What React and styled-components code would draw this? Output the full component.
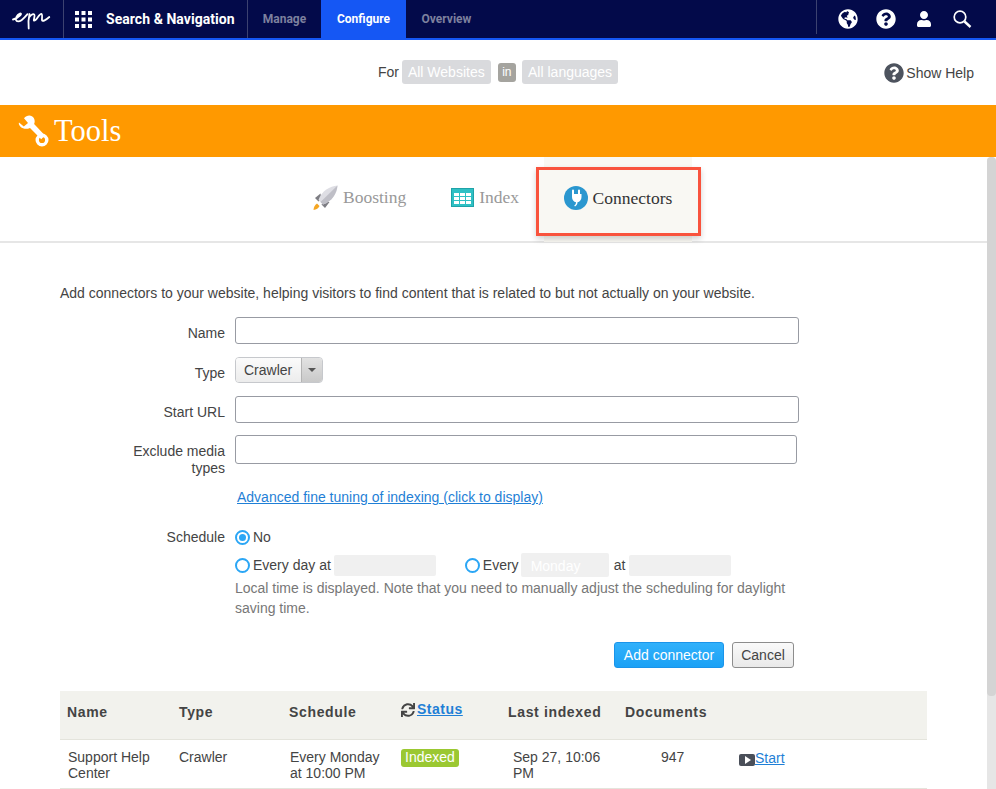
import React from 'react';
import styled, { createGlobalStyle } from 'styled-components';
import { FaGlobeAmericas, FaQuestionCircle, FaUser, FaSync } from 'react-icons/fa';

const Global = createGlobalStyle`
  html, body { margin: 0; padding: 0; height: 789px; overflow: hidden; background: #fff; }
  body { font-family: "Liberation Sans", Arial, sans-serif; font-size: 14px; color: #444; }
  * { box-sizing: border-box; }
`;

const Page = styled.div`
  width: 996px; height: 789px; overflow: hidden; display: flex; flex-direction: column;
`;

const TopBar = styled.header`
  height: 40px; flex: none; display: flex; background: #030a4a; border-bottom: 2px solid #1557f4;
  font-family: "Roboto", sans-serif;
`;
const NavCell = styled.div`
  display: flex; align-items: center; height: 38px; padding: ${p => p.$pad || '0'};
  border-right: ${p => p.$line ? '1px solid #3c4270' : 'none'};
  width: ${p => p.$w || 'auto'};
`;
const Product = styled.span`
  color: #fff; font-weight: 700; font-size: 14px; margin-left: 14px; letter-spacing: 0.05px; white-space: nowrap;
`;
const NavTab = styled.div`
  height: 38px; display: flex; align-items: center; justify-content: center; width: ${p => p.$w};
  font-size: 12px; font-weight: 700; color: ${p => p.$active ? '#fff' : '#7d809e'};
  background: ${p => p.$active ? '#1557f4' : 'transparent'};
`;
const NavRight = styled.div`
  margin-left: auto; display: flex; align-items: center; height: 34px; align-self: flex-start;
  border-left: 1px solid #3c4270; padding: 4px 0 0 12px; color: #fff; margin-right: 15px;
`;
const NavIcon = styled.span`
  display: flex; justify-content: center; width: 38px;
  svg { display: block; }
`;

const ContextBar = styled.div`
  height: 65px; flex: none; position: relative; display: flex; justify-content: center; align-items: flex-start;
  padding: 20px 0 0 3px; background: #fff;
`;
const ForRow = styled.div`
  display: flex; align-items: center; gap: 3px; font-size: 14px; color: #444; line-height: 24px;
`;
const Chip = styled.span`
  background: ${p => p.$dark ? '#a5a49f' : '#d9dadd'}; color: #fff; border-radius: 3px;
  padding: 0 ${p => p.$dark ? '4.5px' : '6px'}; display: inline-flex; align-items: center;
  height: ${p => p.$dark ? '19px' : '24px'}; margin: 0 3px 0 ${p => p.$dark ? '1px' : '0'};
  font-size: ${p => p.$dark ? '12px' : '14px'};
`;
const HelpLink = styled.div`
  position: absolute; right: 22px; top: 22px; display: flex; align-items: center; gap: 2px; font-size: 14px; color: #444; line-height: 22px;
`;

const Banner = styled.div`
  height: 52px; flex: none; background: #ff9900; display: flex; align-items: center; padding-left: 17px; gap: 5px;
  color: #fff; font-family: "Liberation Serif", serif; font-size: 30.5px;
`;

const Main = styled.main`
  flex: 1; position: relative; overflow: hidden; padding-right: 9px;
`;
const ScrollTrack = styled.div`
  position: absolute; right: 0; top: 0; bottom: 0; width: 9px; background: #e6e6e6; border-radius: 5px 5px 0 0;
`;
const ScrollThumb = styled.div`
  width: 9px; height: 539px; background: #d4d4d4; border-radius: 4px;
`;

const Tabs = styled.nav`
  height: 86px; border-bottom: 2px solid #e6e6e6; margin-right: -9px; display: flex; padding-left: 312px;
  font-family: "Liberation Serif", serif; font-size: 17.5px;
`;
const Tab = styled.div`
  display: flex; align-items: center; gap: 5px; height: 84px; padding-bottom: 3px;
  margin-right: ${p => p.$mr || '0'}; color: #999;
`;
const ActiveWrap = styled.div`
  position: relative; width: 165px; height: 85px; padding-top: 10px;
  &::before {
    content: ""; position: absolute; left: 8px; right: 9px; top: 0; bottom: 0; background: #f9f8f3;
  }
`;
const ActiveTab = styled.div`
  position: relative; width: 165px; height: 69px;
  display: flex; align-items: center; gap: 5px; padding: 0 0 7px 25px; background: #f9f8f3; color: #333;
  border: 3px solid #f9533d; box-shadow: 0 3px 6px rgba(0,0,0,.18);
`;

const Content = styled.div`
  padding: 42px 60px 0 60px;
`;
const Intro = styled.p`
  margin: 0 0 15px; font-size: 14px; line-height: 17px; color: #444; white-space: nowrap;
`;
const Row = styled.div`
  display: grid; grid-template-columns: 165px 1fr; column-gap: 10px; margin-bottom: ${p => p.$mb || '0'};
`;
const Label = styled.label`
  text-align: right; font-size: 14px; line-height: 17px; padding: ${p => p.$pt || '8px'} 0 0 65px; color: #444;
`;
const Input = styled.div`
  height: ${p => p.$h || '27px'}; width: ${p => p.$w || '564px'}; border: 1px solid #989ba3; border-radius: 3px; background: #fff;
`;
const Select = styled.div`
  width: 88px; height: 26px; border: 1px solid #c6c8cc; border-radius: 4px; display: flex; overflow: hidden;
  font-size: 14px; color: #444;
`;
const SelectText = styled.div`
  flex: 1; padding: 0 0 0 8px; line-height: 24px; background: linear-gradient(#fbfbfb, #ececec);
`;
const SelectArrow = styled.div`
  width: 21px; background: linear-gradient(#e2e2e2, #c9c9c9); border-left: 1px solid #b4b4b4; display: flex; align-items: center; justify-content: center;
  &::after { content: ""; border: 4px solid transparent; border-top: 4px solid #555; margin-top: 0; border-bottom: 0; }
`;
const AdvancedLink = styled.a`
  display: block; margin: 12px 0 0 2px; color: #1f7fd6; text-decoration: underline; font-size: 14px; line-height: 17px;
`;
const RadioLine = styled.div`
  display: flex; align-items: center; height: ${p => p.$h || '20px'}; margin-top: ${p => p.$mt || '0'}; font-size: 14px; color: #444;
`;
const Radio = styled.span`
  width: 15px; height: 15px; border-radius: 50%; border: 2px solid #2ba6f5; margin-right: 3px; flex: none; background: #fff;
  display: flex; align-items: center; justify-content: center;
  &::after { content: ""; width: 7px; height: 7px; border-radius: 50%; background: ${p => p.$on ? '#2ba6f5' : 'transparent'}; }
`;
const Disabled = styled.span`
  width: ${p => p.$w}; height: ${p => p.$h || '21px'}; background: #f0f0f0; border-radius: 2px; margin: ${p => p.$m || '0 0 0 3px'};
  color: #fff; padding-left: 10px; line-height: 26px; font-size: 14px; display: block;
`;
const Plain = styled.span`
  margin-left: ${p => p.$ml || '0'};
`;
const Note = styled.p`
  margin: 1px 0 0; width: 560px; font-size: 14px; line-height: 20px; color: #777;
`;
const Actions = styled.div`
  display: flex; justify-content: flex-end; gap: 8px; margin: 24px 0 0 0; height: 26px; width: 734px;
`;
const Primary = styled.button`
  width: 110px; height: 26px; border: 1px solid #1a94ea; border-radius: 3px; color: #fff; font: 14px "Liberation Sans", sans-serif;
  background: linear-gradient(#31b1fb, #1ba1f5); padding: 0;
`;
const Secondary = styled.button`
  width: 62px; height: 26px; border: 1px solid #8d8d8d; border-radius: 3px; color: #444; font: 14px "Liberation Sans", sans-serif;
  background: linear-gradient(#fafafa, #e9e9e9); padding: 0;
`;

const Table = styled.div`
  margin-top: 23px; width: 867px; display: grid; grid-template-columns: 112px 110px 111px 108px 117px 114px 195px;
`;
const Head = styled.div`
  height: 49px; background: #f2f2ed; border-bottom: 1px solid #e4e4dc; padding: ${p => p.$p || '13px 0 0 7px'};
  font-weight: 700; font-size: 14px; line-height: 17px; color: #444; letter-spacing: .65px; white-space: nowrap;
  display: flex; align-items: flex-start; gap: 2px;
`;
const HeadLink = styled.a`
  color: #1f7fd6; text-decoration: underline; letter-spacing: .5px;
`;
const SyncGlyph = styled(FaSync)`
  margin-top: 2px;
`;
const Cell = styled.div`
  height: 49px; border-bottom: 1px solid #e4e4dc; padding: ${p => p.$p || '9px 0 0 8px'}; font-size: 14px; line-height: 16px; color: #444;
`;
const Badge = styled.span`
  display: inline-block; background: #9bc832; color: #fff; border-radius: 3px; padding: 0 4px; font-size: 14px; line-height: 17px; height: 18px;
`;
const StartLink = styled.a`
  color: #1f7fd6; text-decoration: underline;
`;
const PlayIcon = styled.span`
  display: inline-flex; width: 16px; height: 12px; background: #4a4f59; border-radius: 2px; align-items: center; justify-content: center; vertical-align: -1px;
  &::after { content: ""; border-left: 6px solid #fff; border-top: 4px solid transparent; border-bottom: 4px solid transparent; margin-left: 1px; }
`;

const Logo = () => (
  <svg width="40" height="22" viewBox="0 0 40 22" fill="none" stroke="#fff" strokeWidth="1.8" strokeLinecap="round" strokeLinejoin="round">
    <path d="M1 11.500c3-.5 6-3 7.500-4.500 1-1.200.2-2-1-1.300C5 7 3.500 10 4 12c.5 2 3.300 1.800 5.500.2 2-1.500 4.500-4.200 6-6" />
    <path d="M17.500 6c-1 4-1.300 9-.8 14.500M17 9.500c1.500-2 4-3.800 5-3.200 1.500.8-.3 4.500-.2 6 .7.800 2.500-.8 4-3 1.300-1.800 3-3.800 3.900-3.200 1 .8 0 4.300.3 6 .6 1.700 3.800 0 7.300-3.100" />
  </svg>
);

const Wrench = () => (
  <svg width="32" height="32" viewBox="0 0 32 32" fill="none">
    <path d="M2 7.500 6.800 11.500 11 8 7 3.300C10-.5 15 0 16.800 3c1.300 2.200 1 4.500.3 6L28 20.500l-3.800 3.800L13 13c-3.500 1.500-7 1-9.500-1.300C2 10.300 1.500 9 2 7.500Z" fill="#fff" />
    <circle cx="25" cy="25" r="4.800" stroke="#fff" strokeWidth="3.400" />
  </svg>
);

const Grid = () => (
  <svg width="17" height="17" viewBox="0 0 17 17" fill="#fff">
    {[0, 6.500, 13].flatMap(y => [0, 6.500, 13].map(x => <rect key={x + '-' + y} x={x} y={y} width="4" height="4" />))}
  </svg>
);

const Rocket = () => (
  <svg width="26" height="26" viewBox="0 0 26 26">
    <path d="M1.500 25c.2-3 1.300-5 3.500-6.500l2.500 2.500C6.500 23.300 4.500 24.700 1.500 25Z" fill="#f5a623" />
    <path d="M8.500 8.500 3 13l3.500 3.500 3-2.500Z" fill="#7d7d83" />
    <path d="M17.500 17 13 23l-3.500-3.500 2.500-3Z" fill="#7d7d83" />
    <path d="M25.500.5C18 1 9.500 6 6.500 15l4.500 4.500C20 16.500 25 8 25.500.5Z" fill="#dedee4" />
    <path d="M25.500.5C25 8 20 16.500 11 19.500L8.500 17Z" fill="#bfbfc7" />
  </svg>
);

const TableIcon = () => (
  <svg width="23" height="19" viewBox="0 0 23 19">
    <rect x=".5" y=".5" width="22" height="18" fill="#2fc0c4" stroke="#1fa3a8" />
    {[5, 9, 13].flatMap(y => [3, 9, 15].map(x => <rect key={x + '-' + y} x={x} y={y} width="5" height="3" fill="#fff" />))}
  </svg>
);

const PlugBadge = () => (
  <svg width="24" height="24" viewBox="0 0 24 24">
    <circle cx="12" cy="12" r="12" fill="#2b97cf" />
    <path d="M8 4.500a1 1 0 0 1 2 0V8h4V4.500a1 1 0 0 1 2 0V8h1.500v3c0 3-1.800 4.800-4 5.200 0 1.800-.6 3-2.500 4.300l-.8-.9c1.200-.9 1.800-1.800 1.800-3.400-2.200-.4-4-2.200-4-5.200V8H8Z" fill="#fff" />
  </svg>
);

const SearchIcon = () => (
  <svg width="20" height="20" viewBox="0 0 20 20" fill="none" stroke="#fff">
    <circle cx="8" cy="8" r="5.800" strokeWidth="1.700" />
    <path d="M12.500 12.500 18.500 18" strokeWidth="2.400" />
  </svg>
);

const HelpGlyph = styled(FaQuestionCircle)`
  color: #4d535e;
`;

export default function App() {
  return (
    <Page>
      <Global />
      <TopBar>
        <NavCell $w="64px" $line $pad="0 0 0 12px"><Logo /></NavCell>
        <NavCell $w="184px" $line $pad="0 0 0 11px"><Grid /><Product>Search &amp; Navigation</Product></NavCell>
        <NavTab $w="73px">Manage</NavTab>
        <NavTab $w="85px" $active>Configure</NavTab>
        <NavTab $w="81px">Overview</NavTab>
        <NavRight>
          <NavIcon><FaGlobeAmericas size={20} /></NavIcon>
          <NavIcon><FaQuestionCircle size={20} /></NavIcon>
          <NavIcon><FaUser size={16} /></NavIcon>
          <NavIcon><SearchIcon /></NavIcon>
        </NavRight>
      </TopBar>
      <ContextBar>
        <ForRow>
          For
          <Chip>All Websites</Chip>
          <Chip $dark>in</Chip>
          <Chip>All languages</Chip>
        </ForRow>
        <HelpLink><HelpGlyph size={20} /> Show Help</HelpLink>
      </ContextBar>
      <Banner><Wrench /><span>Tools</span></Banner>
      <Main>
        <ScrollTrack><ScrollThumb /></ScrollTrack>
        <Tabs>
          <Tab $mr="45px"><Rocket /> Boosting</Tab>
          <Tab $mr="16.5px"><TableIcon /> Index</Tab>
          <ActiveWrap><ActiveTab><PlugBadge /> Connectors</ActiveTab></ActiveWrap>
        </Tabs>
        <Content>
          <Intro>Add connectors to your website, helping visitors to find content that is related to but not actually on your website.</Intro>
          <Row $mb="13px"><Label>Name</Label><Input /></Row>
          <Row $mb="13px"><Label>Type</Label><Select><SelectText>Crawler</SelectText><SelectArrow /></Select></Row>
          <Row $mb="12px"><Label>Start URL</Label><Input /></Row>
          <Row><Label>Exclude media types</Label><Input $h="29px" $w="562px" /></Row>
          <Row $mb="23px"><span /><AdvancedLink>Advanced fine tuning of indexing (click to display)</AdvancedLink></Row>
          <Row>
            <Label $pt="0">Schedule</Label>
            <div>
              <RadioLine $h="16px"><Radio $on />No</RadioLine>
              <RadioLine $h="24px" $mt="8px">
                <Radio />Every day at<Disabled $w="102px" />
                <Plain $ml="29px" /><Radio />Every<Disabled $w="88px" $h="24px" $m="0 0 0 2px">Monday</Disabled>
                <Plain $ml="5px">at</Plain><Disabled $w="102px" $m="0 0 0 4px" />
              </RadioLine>
              <Note>Local time is displayed. Note that you need to manually adjust the scheduling for daylight saving time.</Note>
            </div>
          </Row>
          <Actions><Primary>Add connector</Primary><Secondary>Cancel</Secondary></Actions>
          <Table>
            <Head>Name</Head>
            <Head>Type</Head>
            <Head>Schedule</Head>
            <Head $p="10px 0 0 8px"><SyncGlyph size={14} /><HeadLink>Status</HeadLink></Head>
            <Head>Last indexed</Head>
            <Head>Documents</Head>
            <Head />
            <Cell>Support Help Center</Cell>
            <Cell $p="9px 0 0 7px">Crawler</Cell>
            <Cell>Every Monday at 10:00 PM</Cell>
            <Cell><Badge>Indexed</Badge></Cell>
            <Cell $p="9px 0 0 12px">Sep 27, 10:06 PM</Cell>
            <Cell $p="9px 0 0 43px">947</Cell>
            <Cell $p="10px 0 0 7px"><PlayIcon /><StartLink>Start</StartLink></Cell>
          </Table>
        </Content>
      </Main>
    </Page>
  );
}
